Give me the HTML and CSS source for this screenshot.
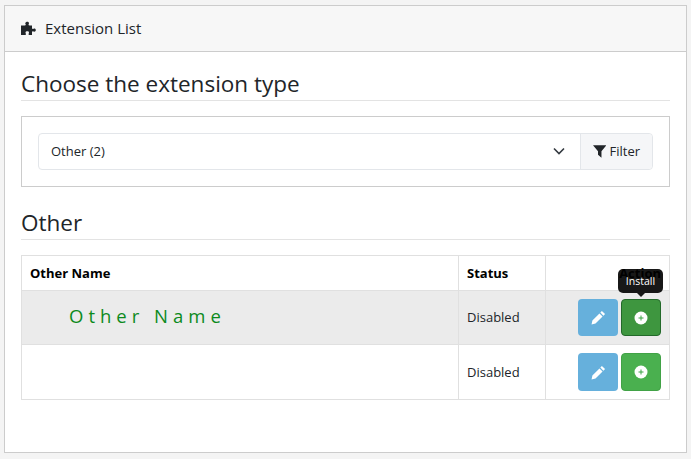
FILE: index.html
```html
<!DOCTYPE html>
<html lang="en">
<head>
    <meta charset="UTF-8">
    <meta name="viewport" content="width=device-width, initial-scale=1.0">
    <title>Extension List</title>
    <link rel="stylesheet" href="styles.css">
</head>

<body>

    <div class="panel">
        <div class="panel-heading">
            <svg class="puzzle" viewBox="0 0 16 16"><path d="M6 1.2c1.3-.9 3-.3 3 1 0 .7-.5 1.1-.5 1.6 0 .4.4.7 1.2.7H12v2.6c0 .6.4.9.8.9.6 0 .9-.5 1.5-.5.9 0 1.5.7 1.5 1.6s-.6 1.6-1.5 1.6c-.6 0-.9-.5-1.5-.5-.4 0-.8.3-.8.9V14H9.4c-.6 0-.9-.4-.9-.8 0-.6.5-.9.5-1.5 0-.9-.7-1.4-1.7-1.4s-1.8.5-1.8 1.4c0 .6.5.9.5 1.5 0 .4-.3.8-.9.8H1V4.5h3.6c.8 0 1.2-.3 1.2-.7 0-.5-.6-1-.6-1.6 0-.4.3-.8.8-1z"/></svg>
            <span>Extension List</span>
        </div>

        <div class="panel-body">
            <h3 class="section-title">Choose the extension type</h3>

            <div class="filter-box">
                <div class="input-group">
                    <div class="fake-select">
                        <span>Other (2)</span>
                        <svg class="chevron" viewBox="0 0 12 8"><path d="M1 1.5l5 5 5-5"/></svg>
                    </div>
                    <button type="button" class="filter-btn">
                        <svg class="funnel" viewBox="0 0 14 14"><path d="M0 1h14L8.8 7.2V14L5.2 11V7.2z"/></svg>
                        Filter
                    </button>
                </div>
            </div>

            <h3 class="section-title">Other</h3>

            <table class="ext-table">
                <thead>
                    <tr>
                        <th class="col-name">Other Name</th>
                        <th class="col-status">Status</th>
                        <th class="col-action">Action</th>
                    </tr>
                </thead>
                <tbody>
                    <tr class="row-hover">
                        <td class="name-cell"><span class="fancy-name">Other Name</span></td>
                        <td>Disabled</td>
                        <td class="action-cell">
                            <div class="actions">
                                <a class="btn btn-edit"><svg viewBox="0 0 14 14"><path d="M10.2.9l2.9 2.9-1.5 1.5-2.9-2.9zM7.9 3.2l2.9 2.9-6.6 6.6-3.7.8.8-3.7z"/></svg></a>
                                <a class="btn btn-install active">
                                    <svg viewBox="0 0 14 14"><circle cx="7" cy="7" r="6.5" fill="#fff"/><path class="plus" d="M7 4.5v5M4.5 7h5"/></svg>
                                    <span class="tooltip">Install</span>
                                </a>
                            </div>
                        </td>
                    </tr>
                    <tr class="row-plain">
                        <td></td>
                        <td>Disabled</td>
                        <td class="action-cell">
                            <div class="actions">
                                <a class="btn btn-edit"><svg viewBox="0 0 14 14"><path d="M10.2.9l2.9 2.9-1.5 1.5-2.9-2.9zM7.9 3.2l2.9 2.9-6.6 6.6-3.7.8.8-3.7z"/></svg></a>
                                <a class="btn btn-install"><svg viewBox="0 0 14 14"><circle cx="7" cy="7" r="6.5" fill="#fff"/><path class="plus" d="M7 4.5v5M4.5 7h5"/></svg></a>
                            </div>
                        </td>
                    </tr>
                </tbody>
            </table>
        </div>
    </div>

</body>
</html>
```

FILE: styles.css
```css
body {
    font-family: "Open Sans", sans-serif;
    font-size: 13px;
    color: #212529;
    background-color: #f4f4f4;
    margin: 0;
    padding: 5px 4px 6px;
    height: 459px;
    box-sizing: border-box;
    overflow: hidden;
}
.panel {
    background-color: #fff;
    border: 1px solid #ccc;
    height: 100%;
    box-sizing: border-box;
}
.panel-heading {
    display: flex;
    align-items: center;
    gap: 9px;
    height: 45px;
    padding: 0 15px;
    background-color: #f7f7f7;
    border-bottom: 1px solid #ccc;
    font-size: 15px;
}
.panel-heading span {
    margin-bottom: 2px;
}
.puzzle {
    width: 16px;
    height: 16px;
    fill: #212529;
}
.panel-body {
    padding: 16px;
}
.section-title {
    margin: 0 0 15px;
    padding-bottom: 1px;
    font-size: 22.5px;
    font-weight: 400;
    line-height: 31px;
    border-bottom: 1px solid #e3e3e3;
}
.filter-box {
    border: 1px solid #ccc;
    padding: 16px;
    margin-bottom: 20px;
}
.input-group {
    display: flex;
    height: 37px;
    box-sizing: border-box;
    border: 1px solid #e3e6ea;
    border-radius: 4px;
}
.fake-select {
    flex: 1;
    display: flex;
    align-items: center;
    justify-content: space-between;
    padding: 0 15px 2px 12px;
}
.chevron {
    width: 12px;
    height: 8px;
    fill: none;
    stroke: #343a40;
    stroke-width: 1.6;
}
.filter-btn {
    display: flex;
    align-items: center;
    gap: 3px;
    width: 72px;
    padding: 0 12px 2px;
    font-family: inherit;
    font-size: 13px;
    color: #212529;
    background-color: #f5f6f8;
    border: none;
    border-left: 1px solid #e3e6ea;
    border-radius: 0 4px 4px 0;
}
.funnel {
    width: 14px;
    height: 14px;
    fill: #212529;
}
.ext-table {
    width: 100%;
    border-collapse: collapse;
    table-layout: fixed;
}
.ext-table th, .ext-table td {
    border: 1px solid #e0e0e0;
    padding: 0 8px;
    text-align: left;
}
.ext-table th {
    height: 34px;
    font-weight: 700;
    color: #000;
}
.col-status {
    width: 70px;
}
.col-action {
    width: 107px;
}
.ext-table .col-action {
    text-align: right;
    padding-right: 8px;
}
.row-hover {
    background-color: #ebebeb;
}
.row-hover td {
    height: 51px;
    padding-bottom: 2px;
}
.row-plain td {
    height: 54px;
}
.ext-table .name-cell {
    padding-left: 47px;
}
.fancy-name {
    font-size: 18.5px;
    letter-spacing: 5px;
    color: #0b8a1c;
    position: relative;
    top: -1px;
}
.ext-table .action-cell {
    padding: 0 8px 0 0;
    height: 53px;
}
.actions {
    display: flex;
    justify-content: flex-end;
    gap: 3px;
}
.btn {
    display: flex;
    align-items: center;
    justify-content: center;
    position: relative;
    width: 40px;
    height: 37px;
    box-sizing: border-box;
    border-radius: 4px;
}
.row-plain .btn {
    height: 38px;
}
.btn svg {
    width: 14px;
    height: 14px;
}
.btn-edit svg {
    width: 15px;
    height: 15px;
    fill: #fff;
}
.btn-edit {
    background-color: #66b0dc;
}
.btn-install {
    background-color: #4ab04f;
    border: 1px solid #41a246;
}
.btn-install.active {
    background-color: #3e963f;
    border-color: #23692a;
}
.plus {
    stroke: #3aa344;
    stroke-width: 1;
    fill: none;
}
.tooltip {
    position: absolute;
    left: -4px;
    bottom: 42px;
    width: 45px;
    height: 24px;
    line-height: 24px;
    font-size: 10.5px;
    text-align: center;
    color: #fff;
    background-color: #000;
    opacity: 0.9;
    border-radius: 5px;
}
.tooltip::after {
    content: "";
    position: absolute;
    left: 50%;
    top: 100%;
    margin-left: -4px;
    border: 4px solid transparent;
    border-bottom: 0;
    border-top-color: #000;
}
```
